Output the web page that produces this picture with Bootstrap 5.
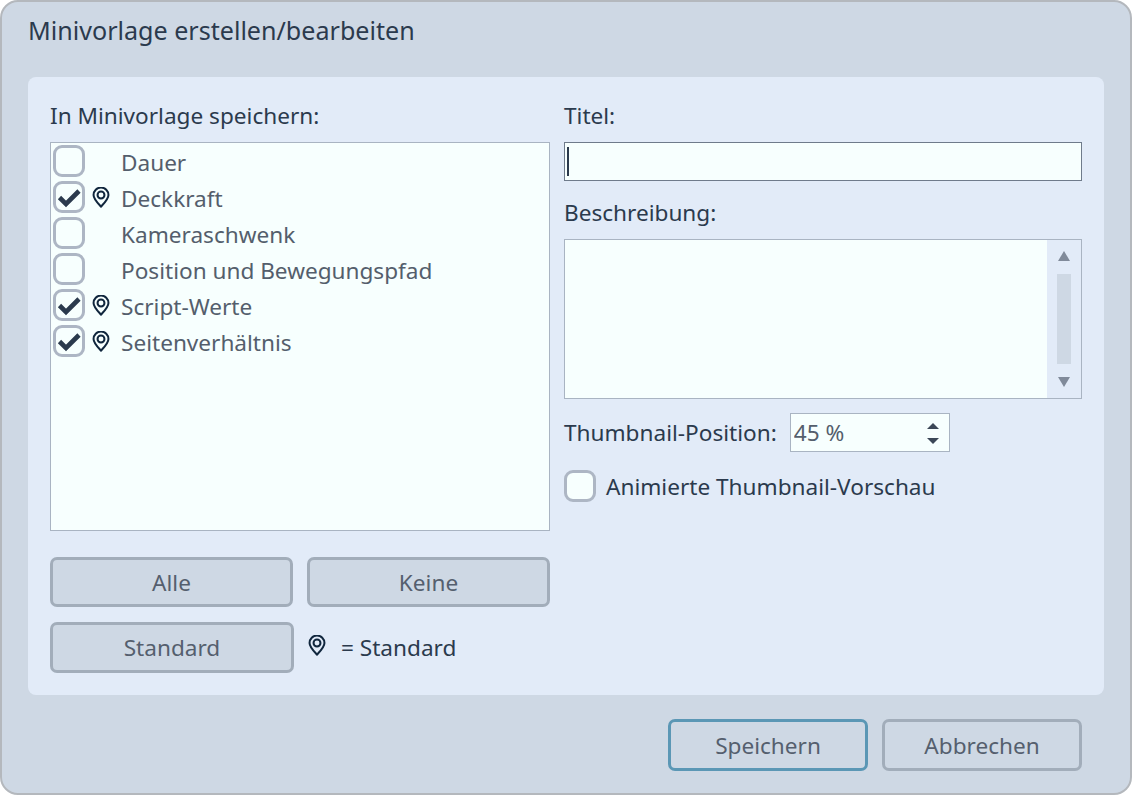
<!DOCTYPE html>
<html lang="de">
<head>
<meta charset="utf-8">
<title>Minivorlage erstellen/bearbeiten</title>
<link rel="stylesheet" href="https://cdn.jsdelivr.net/npm/bootstrap@5.3.0/dist/css/bootstrap.min.css">
<style>
html,body{height:100%;margin:0;background:#fff}
body{font-family:"Noto Sans","Open Sans",sans-serif;font-size:22.6px;line-height:30px;color:#2b3a4d;overflow:hidden}
.dlg{width:1132px;height:795px;background:#ced8e4;border:2px solid #b4b8bd;border-radius:18px;padding:0 26px;display:flex;flex-direction:column}
.dlg-title{height:75px;padding-top:13px;font-size:25.1px;line-height:30px;color:#2b3a4d}
.pane{height:618px;background:#e2ebf8;border-radius:8px;padding:22px;display:flex;gap:14px}
.col-l{width:500px;display:flex;flex-direction:column}
.col-r{width:518px;display:flex;flex-direction:column}
.lbl{height:43px;padding-top:2px;margin:0}
.plist{height:389px;background:#f7fffe;border:1px solid #a9b4c2;padding:2px 0 0 2px;margin:0}
.prow{height:36px;display:flex;align-items:center;color:#545e6c}
.pin{width:18px;height:21px;flex:none}
.pinbox{width:36px;flex:none;display:flex;justify-content:center;padding:0 5px 4px 0}
.form-check-input.chk{width:32px;height:32px;margin:0;flex:none;background-color:#f7fffe;border:3px solid #adb6c4;border-radius:9px;background-size:24px;box-shadow:none;float:none}
.prow .form-check-input.chk{margin-bottom:4px}
.form-check-input.chk:checked{background-color:#f7fffe;border-color:#adb6c4;background-image:url("data:image/svg+xml,%3csvg xmlns='http://www.w3.org/2000/svg' viewBox='0 0 24 24'%3e%3cpath d='M2.500 12.500l6.500 6.500L22 6' fill='none' stroke='%232b3a4d' stroke-width='4.600'/%3e%3c/svg%3e")}
.btnset{margin-top:26px;display:flex;gap:14px}
.btn.act{height:50px;width:243px;background:#ced8e4;border:3px solid #a2adba;border-radius:7px;color:#555f6e;font-size:22.6px;line-height:30px;padding:1px 0 0;--bs-btn-hover-bg:#ced8e4}
.stdrow{margin-top:15px;display:flex;align-items:center;gap:14px}
.stdrow .btn.act{width:244px;height:51px}
.stdnote{display:flex;align-items:center;gap:15px}
.stdnote .pin{margin-bottom:5px}
.fwrap{position:relative;height:39px}
.form-control.inp{height:39px;background:#f7fffe;border:1px solid #6f7b8b;border-radius:0;padding:0;box-shadow:none}
.caret-bar{position:absolute;left:3px;top:5px;width:2px;height:29px;background:#2b3a4d}
.lbl2{margin:17px 0 11px;height:30px}
.areawrap{position:relative;height:160px;background:#f7fffe;border:1px solid #a9b4c2}
.form-control.area{width:481px;height:158px;border:0;border-radius:0;background:transparent;resize:none;box-shadow:none}
.sbar{position:absolute;right:0;top:0;bottom:0;width:34px;background:#e2ebf8;display:flex;flex-direction:column;align-items:center;justify-content:space-between;padding:11px 0}
.sthumb{width:14px;height:90px;background:#ced8e4}
.tri-u,.tri-d{width:0;height:0;border-left:6px solid transparent;border-right:6px solid transparent}
.tri-u{border-bottom:10px solid #808a9a}
.tri-d{border-top:10px solid #808a9a}
.thumbrow{margin-top:14px;display:flex;align-items:center;gap:13px}
.spinwrap{position:relative;width:160px;height:39px;background:#f7fffe;border:1px solid #a9b4c2}
.form-control.spinp{width:130px;height:37px;border:0;background:transparent;border-radius:0;padding:0 0 0 3px;color:#545e6c;font:inherit;box-shadow:none}
.spinarr{position:absolute;right:10px;top:9px;height:21px;display:flex;flex-direction:column;justify-content:space-between}
.spinarr .tri-u{border-bottom:6px solid #3b4757}
.spinarr .tri-d{border-top:6px solid #3b4757}
.animrow{margin-top:18px;display:flex;align-items:center;gap:10px}
.animrow span{padding-top:2px}
.foot{flex:1;display:flex;justify-content:flex-end;gap:14px;padding:24px 22px 0 0}
.btn.ft{width:200px;height:52px;background:#ced8e4;border:3px solid #a2adba;border-radius:7px;color:#555f6e;font-size:22.6px;line-height:30px;padding:1px 0 0}
.btn.ft.pri{border-color:#5b97b5}
</style>
</head>
<body>
<svg width="0" height="0" class="position-absolute">
  <symbol id="pin" viewBox="0 0 17 20">
    <path d="M8.500 18.700C5.400 15.300 1.400 11.400 1.400 7.600a7.100 7.100 0 0 1 14.200 0c0 3.800-4 7.700-7.100 11.100z" fill="none" stroke="#10263d" stroke-width="1.900"/>
    <circle cx="8.500" cy="7.600" r="3.300" fill="none" stroke="#10263d" stroke-width="1.900"/>
  </symbol>
</svg>
<div class="dlg">
  <div class="dlg-title">Minivorlage erstellen/bearbeiten</div>
  <div class="pane">
    <div class="col-l">
      <p class="lbl">In Minivorlage speichern:</p>
      <div class="plist">
        <div class="prow"><input class="form-check-input chk" type="checkbox" aria-label="Dauer"><span class="pinbox"></span><span>Dauer</span></div>
        <div class="prow"><input class="form-check-input chk" type="checkbox" checked aria-label="Deckkraft"><span class="pinbox"><svg class="pin"><use href="#pin"/></svg></span><span>Deckkraft</span></div>
        <div class="prow"><input class="form-check-input chk" type="checkbox" aria-label="Kameraschwenk"><span class="pinbox"></span><span>Kameraschwenk</span></div>
        <div class="prow"><input class="form-check-input chk" type="checkbox" aria-label="Position und Bewegungspfad"><span class="pinbox"></span><span>Position und Bewegungspfad</span></div>
        <div class="prow"><input class="form-check-input chk" type="checkbox" checked aria-label="Script-Werte"><span class="pinbox"><svg class="pin"><use href="#pin"/></svg></span><span>Script-Werte</span></div>
        <div class="prow"><input class="form-check-input chk" type="checkbox" checked aria-label="Seitenverhältnis"><span class="pinbox"><svg class="pin"><use href="#pin"/></svg></span><span>Seitenverhältnis</span></div>
      </div>
      <div class="btnset">
        <button type="button" class="btn act">Alle</button>
        <button type="button" class="btn act">Keine</button>
      </div>
      <div class="stdrow">
        <button type="button" class="btn act">Standard</button>
        <div class="stdnote"><svg class="pin"><use href="#pin"/></svg><span>= Standard</span></div>
      </div>
    </div>
    <div class="col-r">
      <p class="lbl">Titel:</p>
      <div class="fwrap"><input class="form-control inp" type="text" aria-label="Titel"><span class="caret-bar"></span></div>
      <p class="lbl2">Beschreibung:</p>
      <div class="areawrap">
        <textarea class="form-control area" aria-label="Beschreibung"></textarea>
        <div class="sbar"><span class="tri-u"></span><span class="sthumb"></span><span class="tri-d"></span></div>
      </div>
      <div class="thumbrow">
        <span>Thumbnail-Position:</span>
        <div class="spinwrap">
          <input class="form-control spinp" type="text" value="45 %" aria-label="Thumbnail-Position">
          <div class="spinarr"><span class="tri-u"></span><span class="tri-d"></span></div>
        </div>
      </div>
      <div class="animrow">
        <input class="form-check-input chk" type="checkbox" aria-label="Animierte Thumbnail-Vorschau">
        <span>Animierte Thumbnail-Vorschau</span>
      </div>
    </div>
  </div>
  <div class="foot">
    <button type="button" class="btn ft pri">Speichern</button>
    <button type="button" class="btn ft">Abbrechen</button>
  </div>
</div>
</body>
</html>
